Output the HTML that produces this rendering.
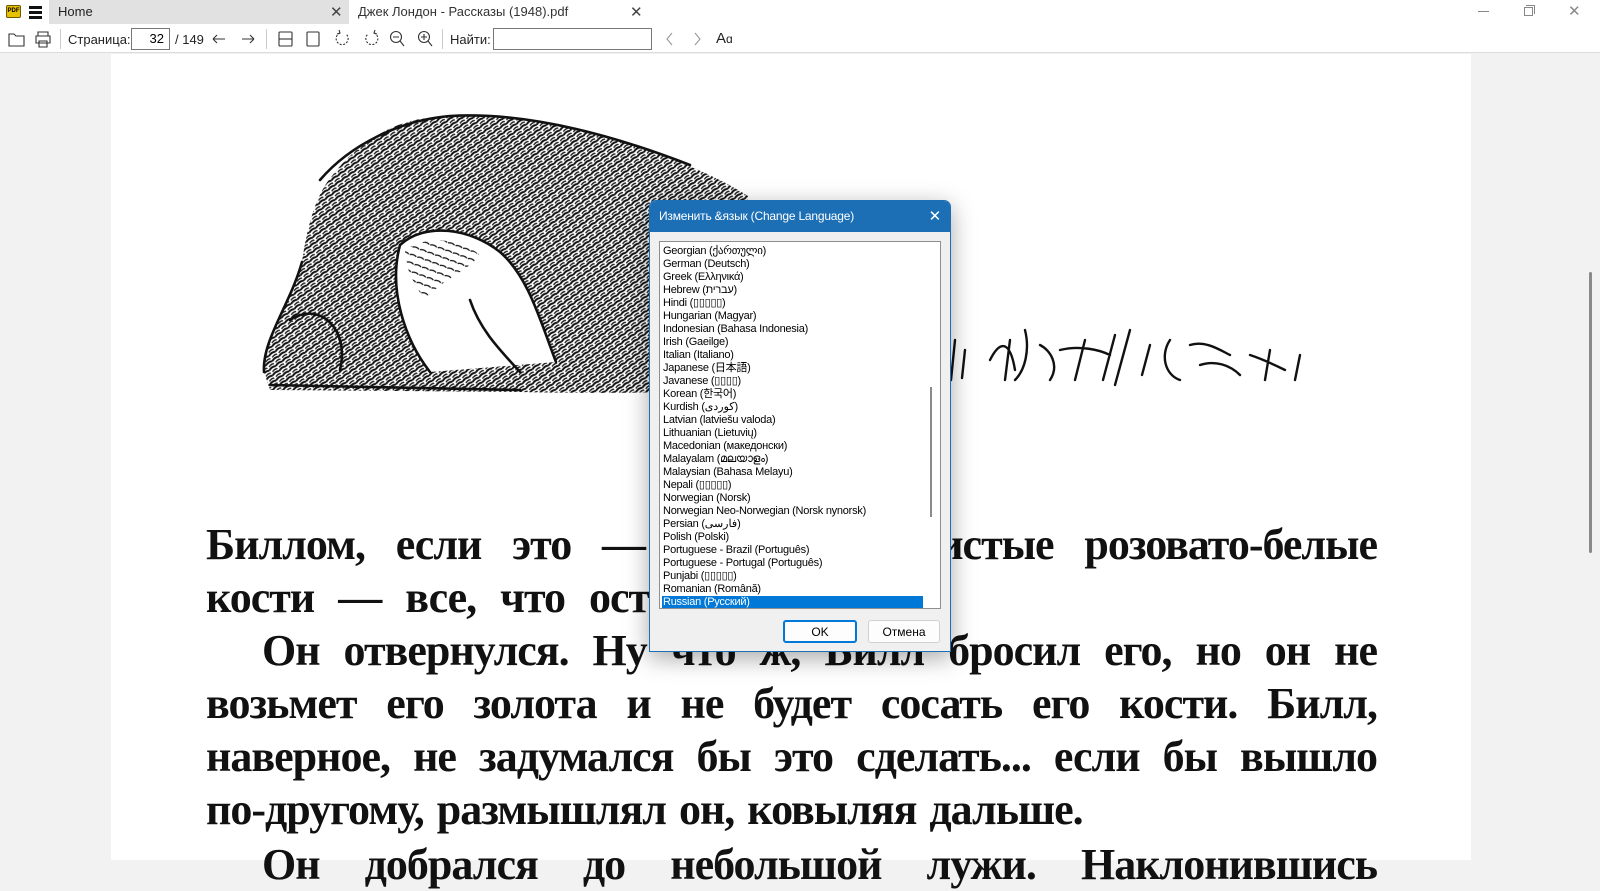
<!DOCTYPE html>
<html><head><meta charset="utf-8">
<style>
*{margin:0;padding:0;box-sizing:border-box}
body{width:1600px;height:860px;overflow:hidden;background:#f2f2f2;font-family:"Liberation Sans","Noto Sans CJK JP",sans-serif;position:relative}
.abs{position:absolute}
#top{left:0;top:0;width:1600px;height:53px;background:#fff;border-bottom:1px solid #dcdcdc}
.t{position:absolute;font-size:13px;color:#222;white-space:nowrap}
.sep{position:absolute;top:29px;width:1px;height:20px;background:#ccc}
#page{left:111px;top:54px;width:1360px;height:806px;background:#fff}
.ln{position:absolute;font-family:"Liberation Serif",serif;font-weight:bold;font-size:44px;line-height:53px;color:#111;white-space:nowrap;text-align:justify;text-align-last:justify;letter-spacing:-1px}
#dlg{left:649px;top:200px;width:302px;height:452px;background:#f0f0f0;border:1px solid #1c6fb5;border-radius:7px 7px 0 0;box-shadow:0 6px 24px rgba(0,0,0,.35)}
#dt{height:31px;background:#1c6fb5;color:#fff;font-size:12px;line-height:31px;padding-left:9px;border-radius:6px 6px 0 0;letter-spacing:-0.2px}
#lb{left:9px;top:40px;width:282px;height:368px;background:#fff;border:1px solid #8f8f8f;overflow:hidden}
.it{position:absolute;left:2px;font-size:11px;letter-spacing:-0.25px;line-height:13px;height:13px;color:#000;white-space:nowrap;width:261px;padding-left:1px}
.btn{position:absolute;top:419px;height:23px;font-size:12px;line-height:21px;text-align:center;color:#000}
</style></head><body>
<div id="top" class="abs">
 <div class="abs" style="left:6px;top:5px;width:15px;height:13px;background:#e8c100;border-radius:2px;border:1px solid #6b5a00;font-size:6px;font-weight:bold;line-height:11px;text-align:center;color:#000">PDF</div>
 <div class="abs" style="left:29px;top:6px;width:13px;height:3px;background:#111"></div>
 <div class="abs" style="left:29px;top:11px;width:13px;height:3px;background:#111"></div>
 <div class="abs" style="left:29px;top:16px;width:13px;height:3px;background:#111"></div>
 <div class="abs" style="left:49px;top:0;width:300px;height:24px;background:#e1e1e1"></div>
 <div class="t" style="left:58px;top:4px">Home</div>
 <div class="t" style="left:330px;top:3px;font-size:15px;color:#444">✕</div>
 <div class="t" style="left:358px;top:4px;color:#333">Джек Лондон - Рассказы (1948).pdf</div>
 <div class="t" style="left:630px;top:3px;font-size:15px;color:#444">✕</div>
 <div class="abs" style="left:1478px;top:11px;width:11px;height:1px;background:#888"></div>
 <div class="abs" style="left:1524px;top:7px;width:9px;height:9px;border:1px solid #888"></div>
 <div class="abs" style="left:1526px;top:5px;width:9px;height:9px;border-top:1px solid #888;border-right:1px solid #888"></div>
 <div class="t" style="left:1568px;top:2px;font-size:15px;color:#888">✕</div>
 <svg class="abs" style="left:0;top:27px" width="760" height="24" viewBox="0 27 760 24" fill="none" stroke="#333" stroke-width="1.1">
  <path d="M9 34h5l2 2h8v10H9z"/>
  <path d="M38 36v-4h10v4M36 36h14v7h-14zM39 41h8v6h-8z"/>
  <path d="M213 39h12M213 39l4-4M213 39l4 4"/>
  <path d="M242 39h12M254 39l-4-4M254 39l-4 4"/>
  <rect x="279" y="32" width="13" height="14" rx="1"/><path d="M279 39h13"/>
  <rect x="307" y="32" width="12" height="14" rx="1"/>
  <path d="M340 33a6 6 0 1 0 6 1" stroke-dasharray="2 1.5"/><path d="M339 30l1 3-3 1"/>
  <path d="M374 33a6 6 0 1 1-6 1" stroke-dasharray="2 1.5"/><path d="M375 30l-1 3 3 1"/>
  <circle cx="396" cy="37" r="5.5"/><path d="M393 37h6M400 41l4 5"/>
  <circle cx="424" cy="37" r="5.5"/><path d="M421 37h6M424 34v6M428 41l4 5"/>
  <path d="M672 33l-5 6 5 6M695 33l5 6-5 6" stroke="#999"/>
 </svg>
 <div class="sep" style="left:60px"></div>
 <div class="t" style="left:68px;top:32px">Страница:</div>
 <div class="abs" style="left:131px;top:28px;width:39px;height:22px;border:1px solid #777;background:#fff;font-size:13px;text-align:right;padding-right:5px;line-height:20px">32</div>
 <div class="t" style="left:175px;top:32px">/ 149</div>
 <div class="sep" style="left:266px"></div>
 <div class="sep" style="left:442px"></div>
 <div class="t" style="left:450px;top:32px">Найти:</div>
 <div class="abs" style="left:493px;top:28px;width:159px;height:22px;border:1px solid #777;background:#fff"></div>
 <div class="t" style="left:716px;top:30px;font-size:15px">A<span style="font-size:12px">ɑ</span></div>
</div>
<div id="page" class="abs"></div>
<div class="abs" style="left:1589px;top:272px;width:3px;height:281px;background:#8a8a8a;border-radius:2px"></div>

<svg class="abs" style="left:0;top:0" width="1600" height="860">
 <defs>
  <pattern id="fur" width="8" height="6" patternUnits="userSpaceOnUse" patternTransform="rotate(-35)">
   <path d="M0 2 q4 -2 8 0" stroke="#111" stroke-width="1.9" fill="none"/>
   <path d="M2 5 q3 -1.5 6 0" stroke="#222" stroke-width="1.4" fill="none"/>
  </pattern>
  <pattern id="fur2" width="8" height="8" patternUnits="userSpaceOnUse" patternTransform="rotate(20)">
   <path d="M0 3 q4 -2 7 0" stroke="#111" stroke-width="1.3" fill="none"/>
  </pattern>
 </defs>
 <path fill-rule="evenodd" fill="url(#fur)" d="M264 372 C262 335 292 305 302 262 C308 220 318 192 332 176 C352 150 382 126 420 119 C470 111 530 118 580 131 C640 146 700 166 748 196 L748 390 C700 392 600 394 520 392 L270 390 Z M400 245 C425 222 470 228 500 252 C528 276 540 320 556 362 L430 372 C405 340 388 290 400 245 Z"/>
 <path fill="url(#fur2)" d="M405 250 C425 235 460 238 480 255 C470 270 440 280 425 300 C415 285 405 270 405 250Z"/>
 <g stroke="#111" stroke-width="2.6" fill="none" stroke-linecap="round">
  <path d="M320 180 C350 145 400 120 450 116 C520 112 600 130 690 165"/>
  <path d="M400 245 C425 222 470 228 500 252 C528 276 540 320 556 362"/>
  <path d="M400 245 C388 290 405 340 430 372"/>
  <path d="M290 320 C320 300 350 330 340 370"/>
  <path d="M264 372 C262 340 290 305 302 262"/>
  <path d="M470 300 C480 330 500 350 520 372"/>
  <path d="M270 385 L520 390"/>
 </g>
 <g stroke="#111" stroke-width="2.4" fill="none" stroke-linecap="round">
  <path d="M955 340 l-4 40M965 350 l-3 28M990 360 c10 -20 20 -20 25 10M1010 340 l-5 40M1025 330 c5 20 0 40 -10 50M1040 345 c10 5 20 20 10 35M1060 350 c20 -5 40 0 50 5M1085 340 l-10 40M1115 335 l-12 45M1130 330 l-15 55M1150 345 l-8 30M1170 340 c-10 15 -5 35 10 40M1190 345 c15 -5 30 5 40 10M1200 365 c15 -5 30 0 40 10M1250 355 c15 5 25 10 35 15M1270 350 l-5 30M1300 355 l-5 25"/>
 </g>
</svg>

<div class="ln" style="left:206px;top:518px;width:1171px">Биллом, если это — Билл. Его чистые розовато-белые</div>
<div class="ln" style="left:206px;top:571px;word-spacing:14px;text-align:left;text-align-last:left">кости — все, что осталось.</div>
<div class="ln" style="left:262px;top:624px;width:1115px">Он отвернулся. Ну что ж, Билл бросил его, но он не</div>
<div class="ln" style="left:206px;top:677px;width:1171px">возьмет его золота и не будет сосать его кости. Билл,</div>
<div class="ln" style="left:206px;top:730px;width:1171px">наверное, не задумался бы это сделать... если бы вышло</div>
<div class="ln" style="left:206px;top:783px;text-align:left;text-align-last:left;word-spacing:3px">по-другому, размышлял он, ковыляя дальше.</div>
<div class="ln" style="left:262px;top:838px;width:1115px">Он добрался до небольшой лужи. Наклонившись</div>

<div id="dlg" class="abs">
 <div id="dt">Изменить &amp;язык (Change Language)<span style="position:absolute;right:9px;top:0;font-size:15px">✕</span></div>
 <div id="lb" class="abs">
  <div class="it" style="top:3px">Georgian (ქართული)</div>
  <div class="it" style="top:16px">German (Deutsch)</div>
  <div class="it" style="top:29px">Greek (Ελληνικά)</div>
  <div class="it" style="top:42px">Hebrew (עברית)</div>
  <div class="it" style="top:55px">Hindi (▯▯▯▯▯)</div>
  <div class="it" style="top:68px">Hungarian (Magyar)</div>
  <div class="it" style="top:81px">Indonesian (Bahasa Indonesia)</div>
  <div class="it" style="top:94px">Irish (Gaeilge)</div>
  <div class="it" style="top:107px">Italian (Italiano)</div>
  <div class="it" style="top:120px">Japanese (日本語)</div>
  <div class="it" style="top:133px">Javanese (▯▯▯▯)</div>
  <div class="it" style="top:146px">Korean (한국어)</div>
  <div class="it" style="top:159px">Kurdish (كوردی)</div>
  <div class="it" style="top:172px">Latvian (latviešu valoda)</div>
  <div class="it" style="top:185px">Lithuanian (Lietuvių)</div>
  <div class="it" style="top:198px">Macedonian (македонски)</div>
  <div class="it" style="top:211px">Malayalam (മലയാളം)</div>
  <div class="it" style="top:224px">Malaysian (Bahasa Melayu)</div>
  <div class="it" style="top:237px">Nepali (▯▯▯▯▯)</div>
  <div class="it" style="top:250px">Norwegian (Norsk)</div>
  <div class="it" style="top:263px">Norwegian Neo-Norwegian (Norsk nynorsk)</div>
  <div class="it" style="top:276px">Persian (فارسی)</div>
  <div class="it" style="top:289px">Polish (Polski)</div>
  <div class="it" style="top:302px">Portuguese - Brazil (Português)</div>
  <div class="it" style="top:315px">Portuguese - Portugal (Português)</div>
  <div class="it" style="top:328px">Punjabi (▯▯▯▯▯)</div>
  <div class="it" style="top:341px">Romanian (Română)</div>
  <div class="it" style="top:354px;background:#0078d7;color:#fff">Russian (Русский)</div>
  <div class="abs" style="left:270px;top:145px;width:2px;height:130px;background:#8a8a8a"></div>
 </div>
 <div class="btn" style="left:133px;width:74px;border:2px solid #0078d7;background:#fdfdfd;border-radius:3px">OK</div>
 <div class="btn" style="left:218px;width:72px;border:1px solid #d0d0d0;background:#fdfdfd;border-radius:3px;line-height:22px">Отмена</div>
</div>
</body></html>
